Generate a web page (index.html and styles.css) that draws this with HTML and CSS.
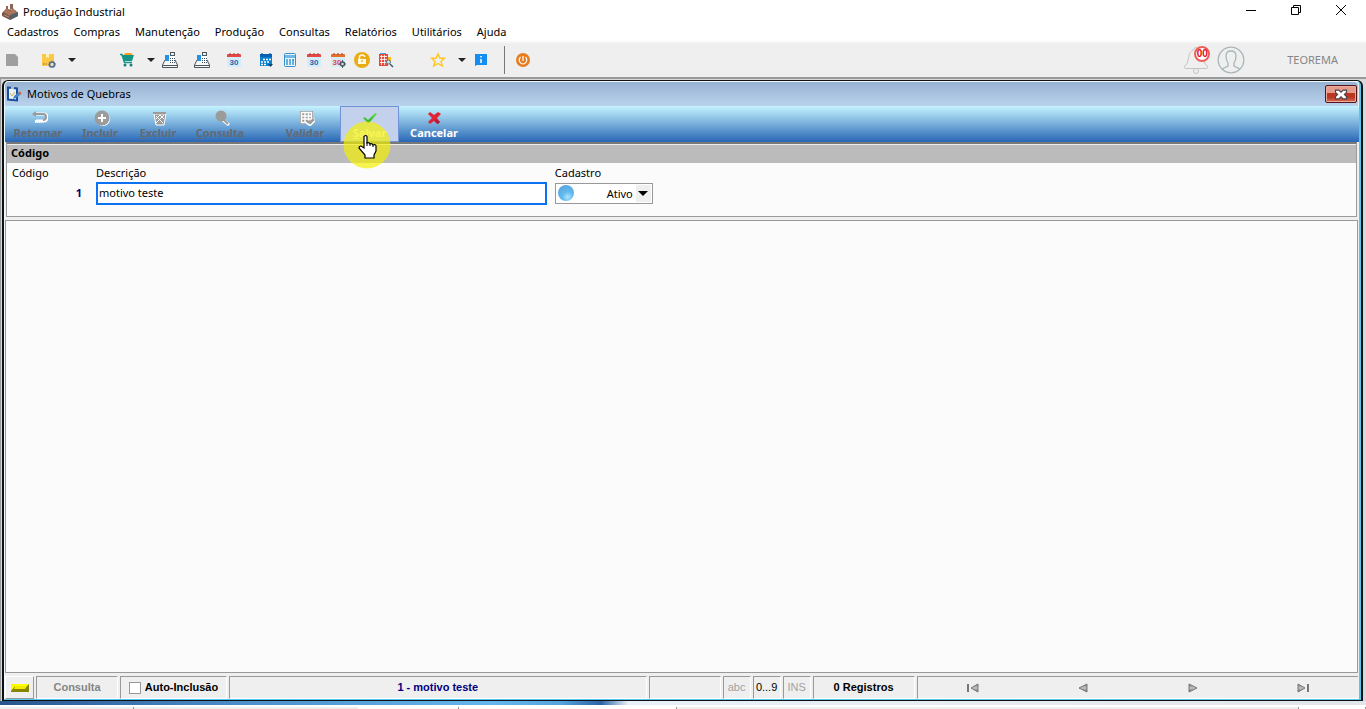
FILE: index.html
```html
<!DOCTYPE html>
<html lang="pt-BR">
<head>
<meta charset="utf-8">
<title>Produção Industrial</title>
<link rel="stylesheet" href="styles.css">
</head>
<body>
<svg class="defs" aria-hidden="true">
  <defs>
    <linearGradient id="gcheck" x1="0" y1="0" x2="0" y2="1"><stop offset="0" stop-color="#6be04c"/><stop offset="1" stop-color="#25ae1b"/></linearGradient>
    <radialGradient id="gball" cx=".6" cy=".75" r=".7"><stop offset="0" stop-color="#b4e2fa"/><stop offset=".45" stop-color="#62bdf0"/><stop offset="1" stop-color="#5aa8e0"/></radialGradient>
    <linearGradient id="gnav" x1="0" y1="0" x2="0" y2="1"><stop offset="0" stop-color="#777"/><stop offset=".5" stop-color="#c4c4c4"/><stop offset="1" stop-color="#666"/></linearGradient>
  </defs>
  <symbol id="register" viewBox="0 0 16 16">
    <path d="M3 8h10l2.500 5v2.500H.5V13z" fill="#f7f7f7" stroke="#4a555d"/>
    <path d="M1 13.500h14" stroke="#4a555d"/><path d="M7 4h6v6H7z" fill="#fff"/>
    <path d="M8 6.500h1m1 0h1m1 0h1M8 8.500h1m1 0h1m1 0h1M8 10.500h1m1 0h1m1 0h1" stroke="#34495e"/>
    <path d="M8 .5h5M8 3.500h5M8.500 1v2M12.500 1v2" stroke="#4a555d" fill="none"/><path d="M3 3h4v6H3z" fill="#2492e6"/>
  </symbol>
  <symbol id="day" viewBox="0 0 16 16">
    <path d="M1 5h14v9q0 1-1 1H2q-1 0-1-1z" fill="#d7ecfa"/><path d="M1 5V3q0-1 1-1h12q1 0 1 1v2z" fill="currentColor"/>
    <path d="M4 1v2m4-2v2m4-2v2" stroke="#a5383b"/>
  </symbol>
  <symbol id="prev" viewBox="0 0 10 10"><path d="M9 1v8L1 5z" fill="url(#gnav)" stroke="#777"/></symbol>
</svg>

<header class="titlebar">
  <svg class="app-icon" viewBox="0 0 16 16"><path d="M0 9l4-4 9 1 3 3v3l-8 4-8-4z" fill="#755849"/><path d="M1 8l4-4 3 3 3-3 4 5-7 3z" fill="#ad735c"/><path d="M8 11l8-3v4l-8 4z" fill="#566064"/><path d="M4 5V2h2v3M8 5V0h3v5" fill="#906452"/><path d="M2 11l5 2" stroke="#be8c70"/></svg>
  <h1 class="app-title">Produção Industrial</h1>
  <div class="window-controls">
    <button class="win-btn" aria-label="Minimizar"><svg viewBox="0 0 12 12"><path d="M1 6.500h10"/></svg></button>
    <button class="win-btn" aria-label="Restaurar"><svg viewBox="0 0 12 12"><path d="M1.500 3.500h7v7h-7zM3.500 3V1.500h7v7H9"/></svg></button>
    <button class="win-btn" aria-label="Fechar"><svg viewBox="0 0 12 12"><path d="M1 1l10 10M11 1L1 11"/></svg></button>
  </div>
</header>

<nav class="menubar">
  <button>Cadastros</button><button>Compras</button><button>Manutenção</button><button>Produção</button><button>Consultas</button><button>Relatórios</button><button>Utilitários</button><button>Ajuda</button>
</nav>

<div class="toolbar">
  <div class="tool-group">
    <button class="tool" aria-label="Documento"><svg viewBox="0 0 16 16"><path d="M2 2h9l3 3v9H2z" fill="#9f9f9f"/></svg></button>
  </div>
  <div class="tool-group group-box">
    <button class="tool" aria-label="Estoque"><svg viewBox="0 0 16 16"><path d="M2 2h12v12H2z" fill="#fbc944"/><path d="M6 2h3v4l-1.500-1L6 6z" fill="#fff0c0"/><path d="M3 12h2m1 0h1" stroke="#a57521"/><circle cx="12" cy="12.500" r="2.500" fill="#e8dfb3" stroke="#536c91" stroke-width="1.500"/><circle cx="12" cy="12.500" r="3.500" fill="none" stroke="#667b96" stroke-dasharray="1 1.500"/></svg></button>
    <button class="drop" aria-label="Mais opções de estoque"></button>
  </div>
  <div class="tool-group group-cart">
    <button class="tool" aria-label="Compras"><svg viewBox="0 0 16 16"><path d="M5 3l1-2h6l2 2z" fill="#ff9d21"/><path d="M3 3h12l-2 6H5z" fill="#159588"/><path d="M1 2.500h2l2.500 8H13" fill="none" stroke="#159588" stroke-width="1.500"/><circle cx="6" cy="13" r="1.500" fill="#128074"/><circle cx="12" cy="13" r="1.500" fill="#128074"/></svg></button>
    <button class="drop" aria-label="Mais opções de compras"></button>
    <button class="tool" aria-label="Caixa"><svg><use href="#register"/></svg></button>
  </div>
  <div class="tool-group group-next"><button class="tool" aria-label="Caixa 2"><svg><use href="#register"/></svg></button></div>
  <div class="tool-group group-next"><button class="tool day-red" aria-label="Dia 30"><svg viewBox="0 0 16 16"><use href="#day"/><text class="day-number" x="8" y="13">30</text></svg></button></div>
  <div class="tool-group group-next">
    <button class="tool" aria-label="Agenda"><svg viewBox="0 0 16 16"><path d="M2 2h12v12H2z" fill="#0b80cf"/><path d="M2 2h12v3H2z" fill="#0861b5"/><path d="M4 1v2m8-2v2" stroke="#03467d"/><path d="M5 7.500h9M3 10h9M3 12.500h6" stroke="#fff" stroke-width="1.500" stroke-dasharray="2 1"/><path d="M10 12h5l-2.500 3z" fill="#17486b"/></svg></button>
    <button class="tool" aria-label="Calculadora"><svg viewBox="0 0 16 16"><rect x="2.500" y="1.500" width="11" height="13" rx="1" fill="#eaf6fe" stroke="#398fc7"/><path d="M3 3h10v3H3z" fill="#70b8e6"/><path d="M4 8h8M4 10h8M4 12h8" stroke="#389ad5" stroke-width="1.400" stroke-dasharray="2 1"/><path d="M11 7h1v2h-1z" fill="#e75243"/></svg></button>
    <button class="tool day-red" aria-label="Calendário"><svg viewBox="0 0 16 16"><use href="#day"/><text class="day-number" x="8" y="13">30</text></svg></button>
    <button class="tool day-orange" aria-label="Configurar calendário"><svg viewBox="0 0 16 16"><use href="#day"/><text class="day-number" x="7" y="13">30</text><circle cx="12.500" cy="12" r="2" fill="#ddd" stroke="#405864" stroke-width="1.500"/><path d="M12.500 8v2m0 4v2M8.500 12h2m4 0h2" stroke="#405864"/></svg></button>
    <button class="tool" aria-label="Bloquear"><svg viewBox="0 0 16 16"><circle cx="8" cy="8" r="8" fill="#e9ac16"/><path d="M4 7h8v5H4z" fill="#fffbe0"/><path d="M5.500 7V5q0-2 2.500-2t2.500 2" fill="none" stroke="#fffbe0" stroke-width="1.500"/><path d="M8 8v2" stroke="#d49300"/></svg></button>
    <button class="tool" aria-label="Localizar empresa"><svg viewBox="0 0 16 16"><path d="M1 2h9v12H1z" fill="#e74b3d"/><path d="M2 1.500h6" stroke="#3da5eb"/><path d="M2 4.500h7M2 7.500h7M2 10.500h7M3.500 3v10M6.500 3v10" stroke="#fff" stroke-width=".8"/><path d="M10 5h3v6h-3z" fill="#fbbb16"/><circle cx="10.500" cy="10" r="2" fill="#c9e6f6" stroke="#617b8e"/><path d="M12 12l3 3" stroke="#405d70" stroke-width="1.500"/></svg></button>
  </div>
  <div class="tool-group group-star">
    <button class="tool" aria-label="Favoritos"><svg viewBox="0 0 16 16"><path d="M8 2l2 4.200h4.500L11 9.500l1.300 4.500L8 11.500 3.700 14 5 9.500 1.500 6.200H6z" fill="none" stroke="#ffc51f" stroke-width="1.400"/></svg></button>
    <button class="drop" aria-label="Mais favoritos"></button>
    <button class="tool" aria-label="Informações"><svg viewBox="0 0 16 16"><path d="M2 2h12v11H4l-2 1z" fill="#168df2"/><path d="M8 4v1.500M8 7v4" stroke="#fff" stroke-width="1.500"/></svg></button>
  </div>
  <div class="tool-group group-power"><button class="tool" aria-label="Sair"><svg viewBox="0 0 16 16"><circle cx="8" cy="8" r="7" fill="#e77d20"/><path d="M5.500 5Q3.500 7 4.500 9.500 6 12 8 12t3.500-2.500Q12.500 7 10.500 5M8 4v5" fill="none" stroke="#fff" stroke-width="1.200"/></svg></button></div>
  <div class="account">
    <button class="bell" aria-label="Notificações"><svg viewBox="0 0 26 30"><path d="M13 2.500q-2 0-2 2.200-5 1.300-5.500 8.300-.5 6-4 8.500-.5 2 1 2h21q1.500 0 1-2-3.500-2.500-4-8.500-.5-7-5.500-8.300 0-2.200-2-2.200z" fill="none" stroke="#c4c4c4"/><circle cx="13" cy="26" r="2.500" fill="none" stroke="#c4c4c4"/></svg><span class="badge">00</span></button>
    <button class="user" aria-label="Usuário"><svg viewBox="0 0 28 28"><g fill="none" stroke="#a9b6b8" stroke-width="1.300"><circle cx="14" cy="14" r="12.800"/><path d="M11 17q-2-3-2-7 0-5 5-5t5 5q0 4-2 7v3l6 3M11 17v3l-6 3"/></g></svg></button>
    <span class="company">TEOREMA</span>
  </div>
</div>

<main class="workspace">
  <section class="child">
    <div class="child-title">
      <svg class="child-icon" viewBox="0 0 16 16"><path d="M2 1.500l9 1v12l-9-1z" fill="#e8f2fb" stroke="#174f9d" stroke-width="2"/><path d="M4 7l2 3 3-4" fill="none" stroke="#d5b44a"/><path d="M5 1h3v2H5z" fill="#bbb"/><path d="M8 10l5-4 2 2-5 4-3 1z" fill="#4284ca"/><path d="M13 6l2 2" stroke="#e66235" stroke-width="2"/></svg>
      <h2>Motivos de Quebras</h2>
      <button class="child-close" aria-label="Fechar janela"><svg viewBox="0 0 12 10"><path d="M1 1h3l2 2 2-2h3v2L9 5l2 2v2H8L6 7 4 9H1V7l2-2-2-2z" fill="#fff" stroke="#49404a"/></svg></button>
    </div>

    <div class="ribbon">
      <button class="action action-wide" disabled><svg viewBox="0 0 16 16"><path d="M4 4h8q3 0 3 3.500t-3 3.500H4" fill="none" stroke="#fff" stroke-width="3"/><path d="M3 4h8q3 0 3 3t-3 3" fill="none" stroke="#9b9b9b" stroke-width="2"/><path d="M0 4l4-3v6z" fill="#9b9b9b"/><path d="M3.500 10v3m2-3v3m2-3v3m2-3v3" stroke="#fff"/></svg><span>Retornar</span></button>
      <button class="action" disabled><svg viewBox="0 0 16 16"><circle cx="9" cy="9" r="7" fill="#fff"/><circle cx="8" cy="8" r="7.500" fill="#9b9b9b"/><path d="M8 4v8M4 8h8" stroke="#fff" stroke-width="2"/></svg><span><u>I</u>ncluir</span></button>
      <button class="action" disabled><svg viewBox="0 0 16 16"><path d="M2 4h12l-2 11H4z" fill="#9b9b9b" stroke="#fff"/><path d="M1 2h13v2H1z" fill="#9b9b9b"/><path d="M4 6l7 7M8 5l4 4M12 5l-8 8M8 5L4 9" stroke="#fff"/></svg><span><u>E</u>xcluir</span></button>
      <button class="action action-wide" disabled><svg viewBox="0 0 16 16"><path d="M9 10l6 5" stroke="#fff" stroke-width="3"/><circle cx="7" cy="6" r="5.500" fill="#9b9b9b"/><path d="M9 9l5 5" stroke="#9b9b9b" stroke-width="2"/></svg><span><u>C</u>onsulta</span></button>
      <button class="action action-check" disabled><svg viewBox="0 0 16 16"><path d="M1 1h13v13H1z" fill="#9b9b9b"/><path d="M2.500 2.500h10v10h-10zM2 6h11M2 9h11M6 2v11M9.500 2v11" fill="none" stroke="#fff" stroke-width="1.400"/><path d="M8 12l3 2 5-5" fill="none" stroke="#fff" stroke-width="4"/><path d="M8 11l3 2 4-4" fill="none" stroke="#9b9b9b" stroke-width="2.500"/></svg><span><u>V</u>alidar</span></button>
      <button class="action action-save"><svg viewBox="0 0 16 16"><path d="M1 8l2-1 3 3 7-7 2 1-8 9H6z" fill="url(#gcheck)"/></svg><span><u>S</u>alvar</span>
        <svg class="pointer" viewBox="0 0 48 48" aria-hidden="true"><circle cx="24" cy="24" r="23.500" fill="#f5f000" fill-opacity=".68"/><path d="M21 15.500q2-2 3 0V22q2-1 3 1 2-1 3 1 3-1 3 1v5l-2 4v3H22v-3l-6-7q0-2 2-2l3 2z" fill="#fff" stroke="#000" stroke-width="1.200"/><path d="M24 21v4m3-3v3m3-1v2" stroke="#000"/></svg>
      </button>
      <button class="action action-wide"><svg viewBox="0 0 16 16"><path d="M2 4l2-2 4 3 4-3 3 2-4 4 3 4-3 2-3-3-4 3-2-2 4-4z" fill="#e12435"/><path d="M9 9l5 3-2 2-3-3z" fill="#a71d3c"/></svg><span>Cancelar</span></button>
    </div>

    <form class="record">
      <h3>Código</h3>
      <div class="fields">
        <div class="field field-code"><span class="label">Código</span><output>1</output></div>
        <div class="field"><label for="descricao">Descrição</label><input class="description" id="descricao" type="text" value="motivo teste"></div>
        <div class="field"><label for="cadastro">Cadastro</label>
          <div class="status-select"><select id="cadastro"><option>Ativo</option><option>Inativo</option></select>
            <svg class="ball" viewBox="0 0 16 16"><circle cx="8" cy="8" r="8" fill="url(#gball)"/></svg><span class="select-arrow"></span></div>
        </div>
      </div>
    </form>

    <div class="content"></div>

    <footer class="statusbar">
      <div class="cell"><svg class="led" viewBox="0 0 18 8" preserveAspectRatio="none"><path d="M0 0h18v8H0z" fill="#858500"/><path d="M0 0h18l-2 2H4L0 7z" fill="#ff0"/><path d="M4 2h12l-2 3H3z" fill="#f3ec00"/></svg></div>
      <div class="cell cell-mode">Consulta</div>
      <div class="cell cell-auto"><input type="checkbox" id="auto"><label for="auto">Auto-Inclusão</label></div>
      <div class="cell cell-record">1 - motivo teste</div>
      <div class="cell cell-empty"></div>
      <div class="cell cell-key">abc</div>
      <div class="cell cell-key key-on">0...9</div>
      <div class="cell cell-key">INS</div>
      <div class="cell cell-count">0 Registros</div>
      <div class="cell cell-nav">
        <button aria-label="Primeiro"><svg class="nav-wide" viewBox="0 0 12 10"><path d="M1 1v8" stroke="#777" stroke-width="2"/><path d="M11 1v8L4 5z" fill="url(#gnav)" stroke="#777"/></svg></button>
        <button aria-label="Anterior"><svg><use href="#prev"/></svg></button>
        <button class="flip" aria-label="Próximo"><svg><use href="#prev"/></svg></button>
        <button class="flip" aria-label="Último"><svg class="nav-wide" viewBox="0 0 12 10"><path d="M1 1v8" stroke="#777" stroke-width="2"/><path d="M11 1v8L4 5z" fill="url(#gnav)" stroke="#777"/></svg></button>
      </div>
    </footer>
  </section>
</main>
<div class="desktop-strip"></div>
<div class="outer-status"><span></span><span></span><span></span><span></span><span></span></div>
</body>
</html>
```
FILE: styles.css
```css
* { box-sizing: border-box; }
html, body { height: 100%; }
body {
  margin: 0;
  display: flex;
  flex-direction: column;
  overflow: hidden;
  background: #fff;
  color: #000;
  font: 11px/16px "Noto Sans", "Open Sans", sans-serif;
}
button { border: 0; padding: 0; background: none; color: inherit; font: inherit; }
h1, h2, h3 { margin: 0; font-size: 11px; font-weight: 400; }
svg { display: block; }
.defs { position: absolute; width: 0; height: 0; }

.titlebar { display: flex; align-items: center; flex: none; height: 23px; padding-left: 2px; }
.app-icon { width: 16px; height: 16px; margin-right: 5px; }
.app-title { flex: 1; }
.window-controls { display: flex; align-items: center; height: 20px; margin-right: 3px; align-self: flex-start; }
.win-btn { width: 45px; height: 20px; display: grid; place-items: center; }
.win-btn svg { width: 12px; height: 12px; fill: none; stroke: #000; stroke-width: 1; }

.menubar { display: flex; flex: none; gap: 15px; height: 18px; padding-left: 7px; line-height: 18px; }

.toolbar {
  display: flex;
  align-items: center;
  flex: none;
  height: 38px;
  border-top: 2px solid #f7f7f7;
  border-bottom: 2px solid #9a9a9a;
  background: #efefef;
}
.tool-group { display: flex; align-items: center; height: 28px; }
.tool { width: 24px; height: 24px; display: grid; place-items: center; }
.tool svg { width: 16px; height: 16px; }
.drop { width: 19px; height: 24px; padding-left: 5px; display: grid; place-items: center; }
.drop::before { content: ""; border: 4px solid transparent; border-top-color: #222; border-bottom: 0; }
.group-box { margin-left: 12px; }
.group-cart { margin-left: 36px; }
.group-next { margin-left: 8px; }
.group-star { margin-left: 28px; }
.group-power { margin-left: 11px; padding-left: 6px; border-left: 1px solid #777; }
.day-red { color: #e54842; }
.day-orange { color: #e8712a; }
.day-number { font: 700 8px "Liberation Sans", sans-serif; text-anchor: middle; fill: #2469ae; }
.day-orange .day-number { fill: #e34b3e; }
.account { display: flex; align-items: center; margin-left: auto; padding-right: 28px; color: #858585; }
.bell { position: relative; width: 28px; height: 30px; }
.bell svg { width: 26px; height: 30px; }
.badge {
  position: absolute; top: 1px; right: 1px;
  width: 16px; height: 16px;
  border: 2px solid #ec6057; border-radius: 50%;
  background: #fff; color: #e30613;
  font: 700 10px/12px "Liberation Sans", sans-serif;
  text-align: center;
  display: flex; justify-content: center;
}
.user { width: 28px; height: 28px; margin-left: 6px; }
.company { margin-left: 42px; }

.workspace { flex: 1; display: flex; min-height: 0; padding: 1px 3px 0 1px; background: #d7d9dd; border-left: 1px solid #999; }
.child {
  flex: 1;
  display: flex;
  flex-direction: column;
  min-width: 0;
  border: 2px solid #101010;
  border-top-width: 1px;
  border-bottom-width: 1px;
  border-radius: 6px 6px 0 0;
  background: #efefef;
  box-shadow: inset -2px -1px 0 #51c8ee, inset 1px 1px 0 #eef9ff;
  padding: 1px 3px 1px 1px;
}
.child-title { display: flex; align-items: center; flex: none; height: 24px; padding: 0 1px; border-radius: 4px 4px 0 0; background: linear-gradient(#98b3d2, #b9d2ed); }
.child-icon { width: 16px; height: 16px; margin-right: 5px; }
.child-title h2 { flex: 1; }
.child-close {
  display: grid; place-items: center;
  width: 32px; height: 18px;
  border: 1px solid #54151c; border-radius: 2px;
  background: linear-gradient(#e59b8b 0 45%, #b93620 45% 70%, #d57159);
  box-shadow: inset 0 0 0 1px #eda99c;
}
.child-close svg { width: 14px; height: 11px; }

.ribbon { display: flex; flex: none; height: 36px; margin-right: -1px; background: linear-gradient(#c5f3ff, #7fb5df 45%, #2967b5); }
.action {
  position: relative;
  display: flex; flex-direction: column; align-items: center;
  width: 58px; padding-top: 4px;
  color: #fff;
  font-weight: 700; font-size: 11px; line-height: 14px;
}
.action > svg:first-child { width: 16px; height: 16px; }
.action:disabled { color: #626a72; }
.action:disabled > svg:first-child { margin-left: 4px; }
.action-wide { width: 66px; }
.action-check { margin-left: 23px; margin-right: 6px; }
.action-save { width: 59px; margin-right: 2px; border: 1px solid #7093d6; background: #c4d1ed; padding-top: 3px; }
.pointer { position: absolute; left: 2px; top: 14px; width: 48px; height: 48px; z-index: 2; pointer-events: none; }

.record { flex: none; height: 75px; margin: 0 1px 0 1px; border: 1px solid #9b9b9b; border-top: 2px solid #787878; background: #fbfbfb; }
.record h3 { height: 19px; padding-left: 4px; border-top: 1px solid #eee; background: #bbb; font-weight: 700; font-size: 11px; line-height: 16px; }
.fields { display: flex; gap: 8px; padding: 2px 5px 0; }
.field { display: flex; flex-direction: column; }
.field-code { width: 76px; }
.field output { margin-top: 4px; padding-right: 6px; text-align: right; font-weight: 700; color: #000080; }
.field label { height: 17px; }
.description { width: 33vw; height: 23px; padding: 0 1px 2px; border: 2px solid #0d72f2; background: #fff; font: inherit; outline: 0; }
.status-select { position: relative; width: 98px; height: 21px; margin-top: 1px; }
.status-select select { appearance: none; width: 100%; height: 100%; padding: 0 19px 0 22px; border: 1px solid #999; border-radius: 0; background: #fff; color: #000; font: inherit; text-align-last: right; }
.ball { position: absolute; left: 3px; top: 2px; width: 16px; height: 16px; pointer-events: none; }
.select-arrow { position: absolute; right: 2px; top: 2px; width: 15px; height: 17px; display: grid; place-items: center; background: #efefef; pointer-events: none; }
.select-arrow::before { content: ""; border: 5px solid transparent; border-top-color: #000; border-bottom: 0; }

.content { flex: 1; margin-top: 3px; border: 1px solid #999; background: #fbfbfb; }

.statusbar { display: flex; gap: 2px; flex: none; height: 26px; padding-top: 3px; font: 700 11px/21px "Liberation Sans", sans-serif; }
.cell { display: flex; align-items: center; justify-content: center; flex: none; border: 1px solid #999; border-right-color: #fff; border-bottom-color: #fff; white-space: nowrap; }
.cell:first-child { width: 29px; border-color: #fff #999 #999 #fff; }
.led { width: 18px; height: 8px; }
.cell-mode { width: 82px; color: #858585; }
.cell-auto { width: 107px; gap: 4px; }
.cell-auto input { appearance: none; width: 12px; height: 12px; margin: 0; border: 1px solid #999; background: #fff; }
.cell-auto input:checked { background: #000; }
.cell-record { flex: 418 1 0; color: #000080; }
.cell-empty { width: 72px; }
.cell-key { width: 28px; font-weight: 400; color: #a2a2a2; }
.key-on { color: #000; }
.cell-count { width: 102px; }
.cell-nav { flex: 443 1 0; border-right: 0; }
.cell-nav button { flex: 1; display: grid; place-items: center; }
.cell-nav svg { width: 10px; height: 10px; }
.cell-nav .nav-wide { width: 12px; }
.flip svg { transform: scaleX(-1); }

.desktop-strip { flex: none; height: 4px; background: linear-gradient(90deg, #28558f, #4c90cc 18%, #65b6ee 36%, #55a4df 41%, #2b64a5 44%, #e8f1f8 46%, #e2e5ea); }
.outer-status { display: flex; flex: none; height: 4px; border-top: 2px solid #fff; background: #efefef; }
.outer-status span { border-right: 1px solid #999; }
.outer-status span:nth-child(1) { flex: 133; }
.outer-status span:nth-child(2) { flex: 325; background: linear-gradient(90deg, #efefef 69%, #fff 69%); }
.outer-status span:nth-child(3) { flex: 217; background: #fff; }
.outer-status span:nth-child(4) { flex: 623; }
.outer-status span:nth-child(5) { flex: 66; background: #fff; }
```
